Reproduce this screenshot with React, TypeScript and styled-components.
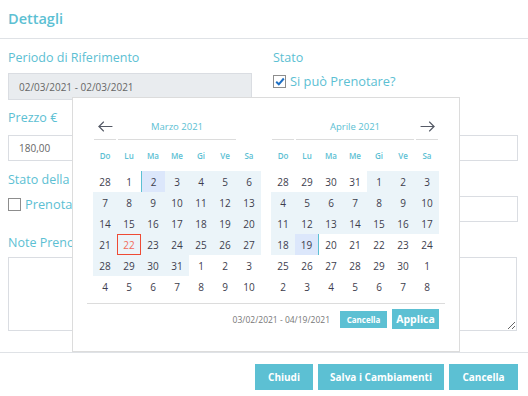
import React from 'react';
import styled, { createGlobalStyle } from 'styled-components';

const TEAL = '#5cc0d3';
const FONT = "'Open Sans', 'Noto Sans', Arial, sans-serif";

const Global = createGlobalStyle`
  html, body { margin: 0; padding: 0; background: #fff; }
  body { font-family: ${FONT}; width: 528px; height: 396px; overflow: hidden; }
  * { box-sizing: border-box; }
`;

const Modal = styled.div`
  position: relative;
  width: 528px;
  height: 396px;
  display: flex;
  flex-direction: column;
  background: #fff;
`;

const Header = styled.div`
  height: 39px;
  display: flex;
  align-items: center;
  padding: 0 8px 1px;
  border-bottom: 1px solid #dfe2e6;
`;

const Title = styled.h5`
  margin: 0;
  font-size: 14.5px;
  font-weight: 600;
  color: ${TEAL};
`;

const Body = styled.div`
  flex: 1;
  padding: 10px 10px 0 8px;
  display: grid;
  grid-template-columns: 244px 245px;
  column-gap: 21px;
  grid-auto-rows: auto;
  align-content: start;
  align-items: start;
`;

const Group = styled.div<{ $mt?: number; $span?: boolean }>`
  display: flex;
  flex-direction: column;
  margin-top: ${(p) => p.$mt ?? 0}px;
  ${(p) => (p.$span ? 'grid-column: 1 / span 2;' : '')}
`;

const Label = styled.label<{ $mb?: number }>`
  height: 18px;
  line-height: 18px;
  font-size: 12.5px;
  font-weight: 500;
  color: ${TEAL};
  margin-bottom: ${(p) => p.$mb ?? 7}px;
  white-space: nowrap;
`;

const Input = styled.input<{ $h?: number }>`
  height: ${(p) => p.$h ?? 26}px;
  width: 100%;
  border: 1px solid #dadde2;
  background: ${(p) => (p.readOnly ? '#e9ecef' : '#fff')};
  padding: 0 10px;
  font-family: ${FONT};
  font-size: 10px;
  color: #666;
  outline: none;
`;

const TextArea = styled.textarea`
  width: 509px;
  height: 74px;
  border: 1px solid #dadde2;
  resize: both;
  font-family: ${FONT};
  outline: none;
  display: block;
`;

const CheckRow = styled.label`
  display: flex;
  align-items: center;
  gap: 4px;
  height: 18px;
  font-size: 12.8px;
  color: ${TEAL};
  padding-left: 0;
  white-space: nowrap;
`;

const Box = styled.span`
  width: 13px;
  height: 13px;
  border: 1px solid #8d8d8d;
  background: #fff;
  display: inline-flex;
  align-items: center;
  justify-content: center;
`;

const Footer = styled.div`
  height: 44px;
  border-top: 1px solid #dfe2e6;
  display: flex;
  justify-content: flex-end;
  align-items: flex-start;
  gap: 5px;
  padding: 11px 10px 0 0;
`;

const Button = styled.button<{ $w: number }>`
  width: ${(p) => p.$w}px;
  height: 26px;
  border: none;
  background: ${TEAL};
  color: #fff;
  font-family: ${FONT};
  font-size: 10px;
  font-weight: 700;
  padding: 0;
`;

/* ---------- Date range picker ---------- */

const Picker = styled.div`
  position: absolute;
  left: 72px;
  top: 97px;
  width: 388px;
  height: 255px;
  background: #fff;
  border: 1px solid #dcdcdc;
  display: flex;
  flex-direction: column;
`;

const Calendars = styled.div`
  display: flex;
  gap: 10px;
  padding: 16px 20px 0 20px;
`;

const Cal = styled.div`
  width: 168px;
  display: grid;
  grid-template-columns: repeat(7, 24px);
`;

const HeadCell = styled.div<{ $span?: number; $line?: boolean }>`
  grid-column: span ${(p) => p.$span ?? 1};
  height: 26px;
  margin: 0 1px;
  border-bottom: 1px solid ${(p) => (p.$line ? '#dcdcdc' : 'transparent')};
  display: flex;
  align-items: center;
  justify-content: center;
  font-size: 9.5px;
  font-weight: 500;
  color: ${TEAL};
`;

const DowCell = styled.div`
  height: 22px;
  margin: 4px 0 5px;
  display: flex;
  align-items: center;
  justify-content: center;
  font-size: 8px;
  font-weight: 600;
  color: ${TEAL};
`;

type Kind = 'none' | 'range' | 'start' | 'end';

const DayCell = styled.div<{ $kind: Kind; $today?: boolean }>`
  height: 21px;
  display: flex;
  align-items: center;
  justify-content: center;
  font-size: 10px;
  line-height: 12px;
  color: ${(p) => (p.$today ? '#f26b5b' : '#3d3d4d')};
  background: ${(p) =>
    p.$kind === 'range' ? '#ebf4f9' : p.$kind === 'start' || p.$kind === 'end' ? '#dce7fb' : '#fff'};
  border-left: ${(p) => (p.$kind === 'start' ? `1px solid ${TEAL}` : 'none')};
  border-right: ${(p) => (p.$kind === 'end' ? `1px solid ${TEAL}` : 'none')};
  box-shadow: ${(p) => (p.$today ? 'inset 0 0 0 1px #ee4b35' : 'none')};
`;

const PickerFooter = styled.div`
  margin: 6px 14px 0;
  border-top: 1px solid #dcdcdc;
  display: flex;
  justify-content: flex-end;
  align-items: center;
  gap: 5px;
  padding: 4px 6px 0 0;
  height: 27px;
`;

const RangeText = styled.span`
  font-size: 8.5px;
  color: #777;
  margin-right: 5px;
`;

const SmallBtn = styled.button<{ $big?: boolean }>`
  width: 47px;
  height: ${(p) => (p.$big ? 20 : 17)}px;
  border: none;
  padding: 0;
  background: ${TEAL};
  color: #fff;
  font-family: ${FONT};
  font-weight: 700;
  font-size: ${(p) => (p.$big ? 10.5 : 8)}px;
`;

const ArrowSvg = ({ dir }: { dir: 'left' | 'right' }) => (
  <svg width="15" height="11" viewBox="0 0 15 11" fill="none" stroke="#555a66" strokeWidth="1.1" strokeLinecap="round" strokeLinejoin="round">
    {dir === 'left' ? (
      <>
        <path d="M14 5.5H1" />
        <path d="M5.5 1L1 5.5L5.5 10" />
      </>
    ) : (
      <>
        <path d="M1 5.5H14" />
        <path d="M9.5 1L14 5.5L9.5 10" />
      </>
    )}
  </svg>
);

const DOW = ['Do', 'Lu', 'Ma', 'Me', 'Gi', 'Ve', 'Sa'];
const RANGE_START = new Date(2021, 2, 2).getTime();
const RANGE_END = new Date(2021, 3, 19).getTime();
const TODAY = new Date(2021, 2, 22).getTime();

function monthCells(year: number, month: number) {
  const first = new Date(year, month, 1);
  const start = new Date(year, month, 1 - first.getDay());
  const cells: { day: number; kind: Kind; today: boolean }[] = [];
  for (let i = 0; i < 42; i++) {
    const d = new Date(start.getFullYear(), start.getMonth(), start.getDate() + i);
    const t = d.getTime();
    const inMonth = d.getMonth() === month;
    let kind: Kind = 'none';
    if (inMonth) {
      if (t === RANGE_START) kind = 'start';
      else if (t === RANGE_END) kind = 'end';
      else if (t > RANGE_START && t < RANGE_END) kind = 'range';
    }
    cells.push({ day: d.getDate(), kind, today: t === TODAY });
  }
  return cells;
}

const Calendar = ({ year, month, title, side }: { year: number; month: number; title: string; side: 'left' | 'right' }) => (
  <Cal>
    <HeadCell $line>{side === 'left' ? <ArrowSvg dir="left" /> : null}</HeadCell>
    <HeadCell $span={5} $line>{title}</HeadCell>
    <HeadCell $line={side === 'right'}>{side === 'right' ? <ArrowSvg dir="right" /> : null}</HeadCell>
    {DOW.map((d) => (
      <DowCell key={d}>{d}</DowCell>
    ))}
    {monthCells(year, month).map((c, i) => (
      <DayCell key={i} $kind={c.kind} $today={c.today}>
        {c.day}
      </DayCell>
    ))}
  </Cal>
);

const Check = () => (
  <svg width="10" height="9" viewBox="0 0 10 9">
    <path d="M1.2 4.8L3.8 7.3L8.8 1.5" fill="none" stroke="#1d6fc4" strokeWidth="2" />
  </svg>
);

export default function App() {
  return (
    <>
      <Global />
      <Modal>
        <Header>
          <Title>Dettagli</Title>
        </Header>
        <Body>
          <Group>
            <Label $mb={6}>Periodo di Riferimento</Label>
            <Input $h={27} readOnly value="02/03/2021 - 02/03/2021" />
          </Group>
          <Group>
            <Label $mb={5}>Stato</Label>
            <CheckRow>
              <Box>
                <Check />
              </Box>
              Si può Prenotare?
            </CheckRow>
          </Group>
          <Group $mt={9}>
            <Label $mb={8}>Prezzo €</Label>
            <Input defaultValue="180,00" />
          </Group>
          <Group $mt={9}>
            <Label $mb={8}>Posti</Label>
            <Input defaultValue="" />
          </Group>
          <Group $mt={10}>
            <Label $mb={6}>Stato della Prenotazione</Label>
            <CheckRow>
              <Box />
              Prenotata
            </CheckRow>
          </Group>
          <Group $mt={10}>
            <Label $mb={7}>Codice</Label>
            <Input defaultValue="" />
          </Group>
          <Group $mt={12} $span>
            <Label $mb={5}>Note Prenotazione</Label>
            <TextArea defaultValue="" />
          </Group>
        </Body>
        <Footer>
          <Button $w={58}>Chiudi</Button>
          <Button $w={126}>Salva i Cambiamenti</Button>
          <Button $w={69}>Cancella</Button>
        </Footer>
        <Picker>
          <Calendars>
            <Calendar year={2021} month={2} title="Marzo 2021" side="left" />
            <Calendar year={2021} month={3} title="Aprile 2021" side="right" />
          </Calendars>
          <PickerFooter>
            <RangeText>03/02/2021 - 04/19/2021</RangeText>
            <SmallBtn>Cancella</SmallBtn>
            <SmallBtn $big>Applica</SmallBtn>
          </PickerFooter>
        </Picker>
      </Modal>
    </>
  );
}
